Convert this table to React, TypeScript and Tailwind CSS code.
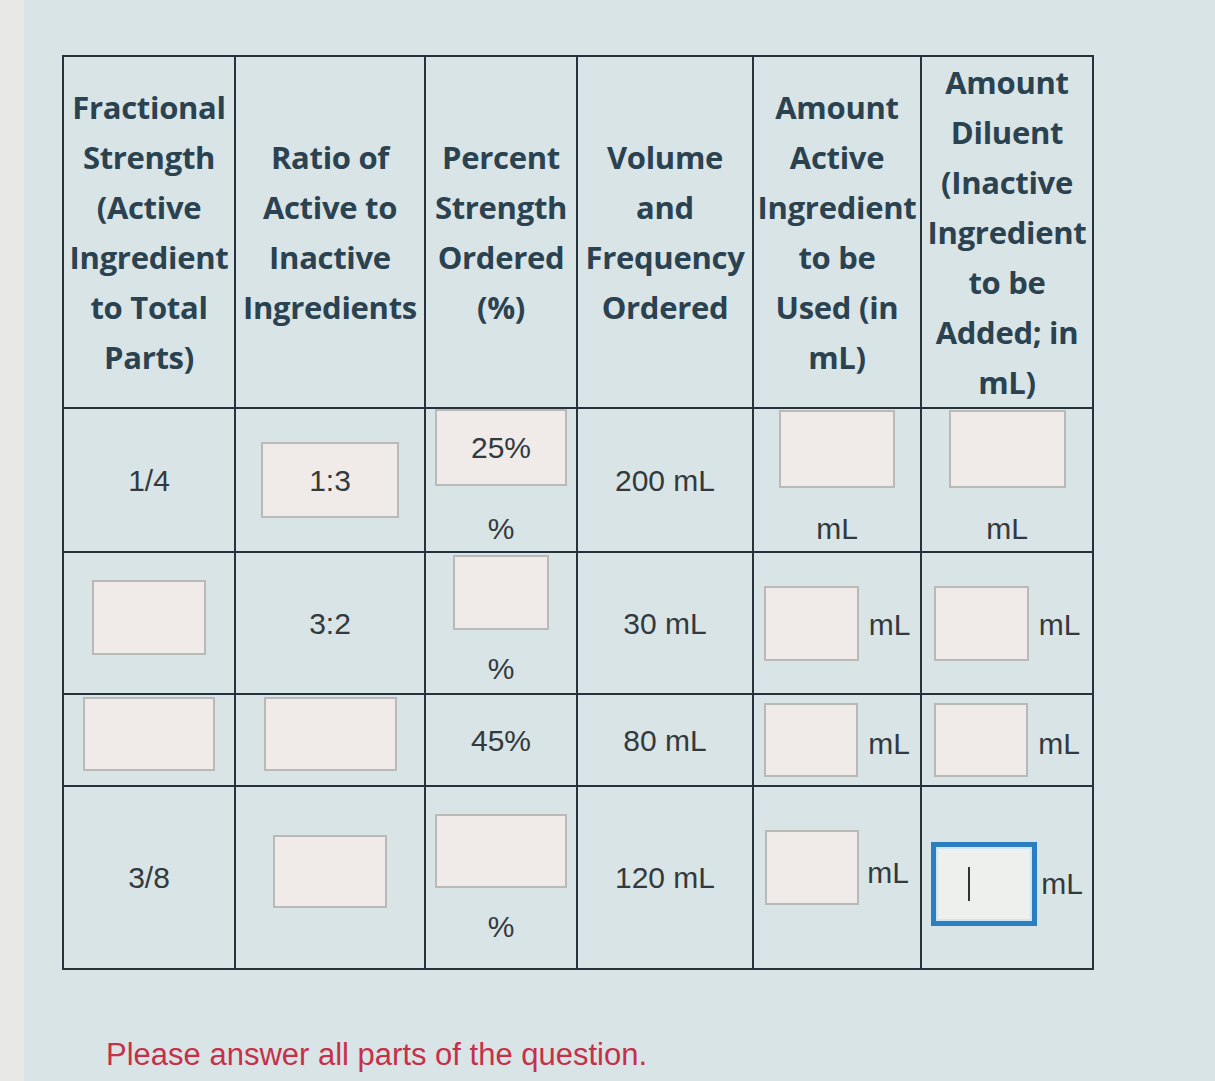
import React from "react";

const hdr = "font-['Open_Sans',sans-serif] font-bold text-[31px] leading-[50px] tracking-[-0.3px] text-[#2b4250]";
const cell = "border-2 border-[#26323e] align-middle text-center p-0";

function Box({ w, h, focus, children }: { w: number; h: number; focus?: boolean; children?: React.ReactNode }) {
  return (
    <div
      className={
        focus
          ? "inline-flex items-center justify-center bg-[#eef0ee] border-[5px] border-[#2b7fc1] shadow-[inset_0_0_0_2px_#cfe6f5]"
          : "inline-flex items-center justify-center bg-[#f0ebe8] border-2 border-[#b9b9b7]"
      }
      style={{ width: w, height: h }}
    >
      {children}
    </div>
  );
}

const body = "font-['Liberation_Sans',Arial,sans-serif] text-[30px] text-[#333a3e]";

export default function App() {
  return (
    <div className="flex min-h-[1081px] w-[1215px] bg-[#d9e4e6]">
      <div className="w-[24px] bg-[#e8e9e6]" />
      <div className="flex-1 flex flex-col pt-[55px] pl-[38px]">
        <table className="table-fixed border-collapse w-[1030px]">
          <colgroup>
            <col className="w-[172px]" />
            <col className="w-[190px]" />
            <col className="w-[152px]" />
            <col className="w-[176px]" />
            <col className="w-[168px]" />
            <col className="w-[172px]" />
          </colgroup>
          <thead>
            <tr className="h-[350px]">
              <th className={cell}>
                <div className={hdr}>Fractional Strength (Active Ingredient to Total Parts)</div>
              </th>
              <th className={cell}>
                <div className={hdr}>Ratio of Active to Inactive Ingredients</div>
              </th>
              <th className={cell}>
                <div className={hdr}>Percent Strength Ordered (%)</div>
              </th>
              <th className={cell}>
                <div className={hdr}>Volume<br />and Frequency Ordered</div>
              </th>
              <th className={cell}>
                <div className={hdr}>Amount Active Ingredient to be<br />Used (in mL)</div>
              </th>
              <th className={cell}>
                <div className={hdr}>Amount Diluent (Inactive Ingredient to be Added; in mL)</div>
              </th>
            </tr>
          </thead>
          <tbody className={body}>
            <tr className="h-[143px]">
              <td className={cell}>1/4</td>
              <td className={cell}>
                <Box w={138} h={76}>1:3</Box>
              </td>
              <td className={cell}>
                <div className="flex flex-col items-center gap-[20px]">
                  <Box w={132} h={77}>25%</Box>
                  <span>%</span>
                </div>
              </td>
              <td className={cell}>200 mL</td>
              <td className={cell}>
                <div className="flex flex-col items-center gap-[18px]">
                  <Box w={116} h={78} />
                  <span>mL</span>
                </div>
              </td>
              <td className={cell}>
                <div className="flex flex-col items-center gap-[18px]">
                  <Box w={117} h={78} />
                  <span>mL</span>
                </div>
              </td>
            </tr>
            <tr className="h-[142px]">
              <td className={cell}>
                <Box w={114} h={75} />
              </td>
              <td className={cell}>3:2</td>
              <td className={cell}>
                <div className="flex flex-col items-center gap-[16px]">
                  <Box w={96} h={75} />
                  <span>%</span>
                </div>
              </td>
              <td className={cell}>30 mL</td>
              <td className={cell}>
                <div className="flex items-start justify-center gap-[10px]">
                  <Box w={95} h={75} />
                  <span className="pt-[16px]">mL</span>
                </div>
              </td>
              <td className={cell}>
                <div className="flex items-start justify-center gap-[10px]">
                  <Box w={95} h={75} />
                  <span className="pt-[16px]">mL</span>
                </div>
              </td>
            </tr>
            <tr className="h-[92px]">
              <td className={cell}>
                <Box w={132} h={74} />
              </td>
              <td className={cell}>
                <Box w={133} h={74} />
              </td>
              <td className={cell}>45%</td>
              <td className={cell}>80 mL</td>
              <td className={cell}>
                <div className="flex items-start justify-center gap-[10px]">
                  <Box w={94} h={74} />
                  <span className="pt-[18px]">mL</span>
                </div>
              </td>
              <td className={cell}>
                <div className="flex items-start justify-center gap-[10px]">
                  <Box w={94} h={74} />
                  <span className="pt-[18px]">mL</span>
                </div>
              </td>
            </tr>
            <tr className="h-[183px]">
              <td className={cell}>3/8</td>
              <td className={cell}>
                <Box w={114} h={73} />
              </td>
              <td className={cell}>
                <div className="flex flex-col items-center gap-[16px] pt-[8px]">
                  <Box w={132} h={74} />
                  <span>%</span>
                </div>
              </td>
              <td className={cell}>120 mL</td>
              <td className={cell}>
                <div className="flex items-start justify-center gap-[8px] pb-[20px]">
                  <Box w={94} h={75} />
                  <span className="pt-[20px]">mL</span>
                </div>
              </td>
              <td className={cell}>
                <div className="flex items-center justify-center gap-[4px] pt-[12px]">
                  <Box w={106} h={84} focus>
                    <span className="block w-[2px] h-[34px] bg-[#333] -ml-[30px]" />
                  </Box>
                  <span>mL</span>
                </div>
              </td>
            </tr>
          </tbody>
        </table>
        <div className="mt-[62px] ml-[44px] font-['Liberation_Sans',Arial,sans-serif] text-[31px] text-[#c6304a]">
          Please answer all parts of the question.
        </div>
      </div>
    </div>
  );
}
